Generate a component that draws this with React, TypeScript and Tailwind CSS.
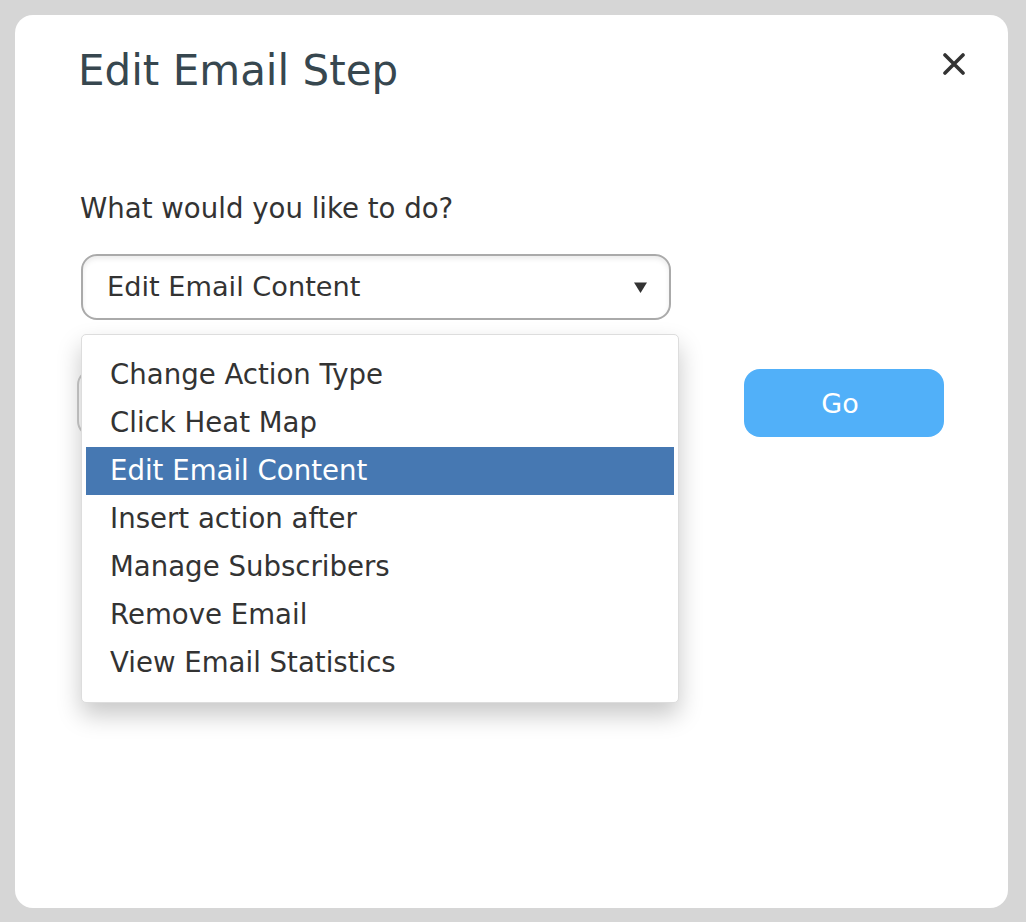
import React from "react";

const items = [
  "Change Action Type",
  "Click Heat Map",
  "Edit Email Content",
  "Insert action after",
  "Manage Subscribers",
  "Remove Email",
  "View Email Statistics",
];

export default function App() {
  return (
    <div
      className="w-[1026px] h-[922px] bg-[#d6d6d6] p-[15px] pr-[18px] pb-[14px]"
      style={{ fontFamily: "'DejaVu Sans', 'Open Sans', sans-serif" }}
    >
      <div className="relative w-full h-full bg-white rounded-[18px] pl-[63px] pr-[64px] pt-[31px]">
        <button className="absolute right-[43px] top-[38px] w-[22px] h-[22px] flex items-center justify-center">
          <svg width="22" height="22" viewBox="0 0 22 22">
            <path d="M2 2 L20 20 M20 2 L2 20" stroke="#333" strokeWidth="3.6" strokeLinecap="round" />
          </svg>
        </button>
        <h1 className="text-[42px] leading-[50px] text-[#37474f] font-normal">Edit Email Step</h1>
        <div className="mt-[95px] ml-[2px] text-[27.6px] leading-[36px] text-[#333]">What would you like to do?</div>
        <div className="relative mt-[27px] ml-[3px]">
          <div className="flex items-center justify-between w-[590px] h-[66px] rounded-[16px] border-2 border-[#aaa] shadow-[inset_0_3px_5px_rgba(0,0,0,0.08)] pl-[24px] pr-[21px]">
            <span className="text-[27.2px] text-[#333]">Edit Email Content</span>
            <svg width="15" height="13" viewBox="0 0 15 13">
              <path d="M1 1.5 L14 1.5 L7.5 12 Z" fill="#333" />
            </svg>
          </div>
          <div className="absolute left-0 top-[80px] w-[598px] z-10 bg-white border border-[#ddd] rounded-[5px] shadow-[0_12px_24px_rgba(0,0,0,0.22)] pt-[16px] pb-[15px] px-[4px]">
            {items.map((it) => (
              <div
                key={it}
                className={
                  "h-[48px] flex items-center pl-[24px] text-[27.6px] " +
                  (it === "Edit Email Content" ? "bg-[#4678b2] text-white" : "text-[#333]")
                }
              >
                {it}
              </div>
            ))}
          </div>
          <div className="flex items-center mt-[49px] -ml-[4px]">
            <div className="w-[593px] h-[68px] rounded-[16px] border-2 border-[#ccc]" />
            <button className="ml-[74px] w-[200px] h-[68px] rounded-[16px] bg-[#51b0f9] text-white text-[27px] pr-[8px] pt-[2px]">
              Go
            </button>
          </div>
        </div>
      </div>
    </div>
  );
}
